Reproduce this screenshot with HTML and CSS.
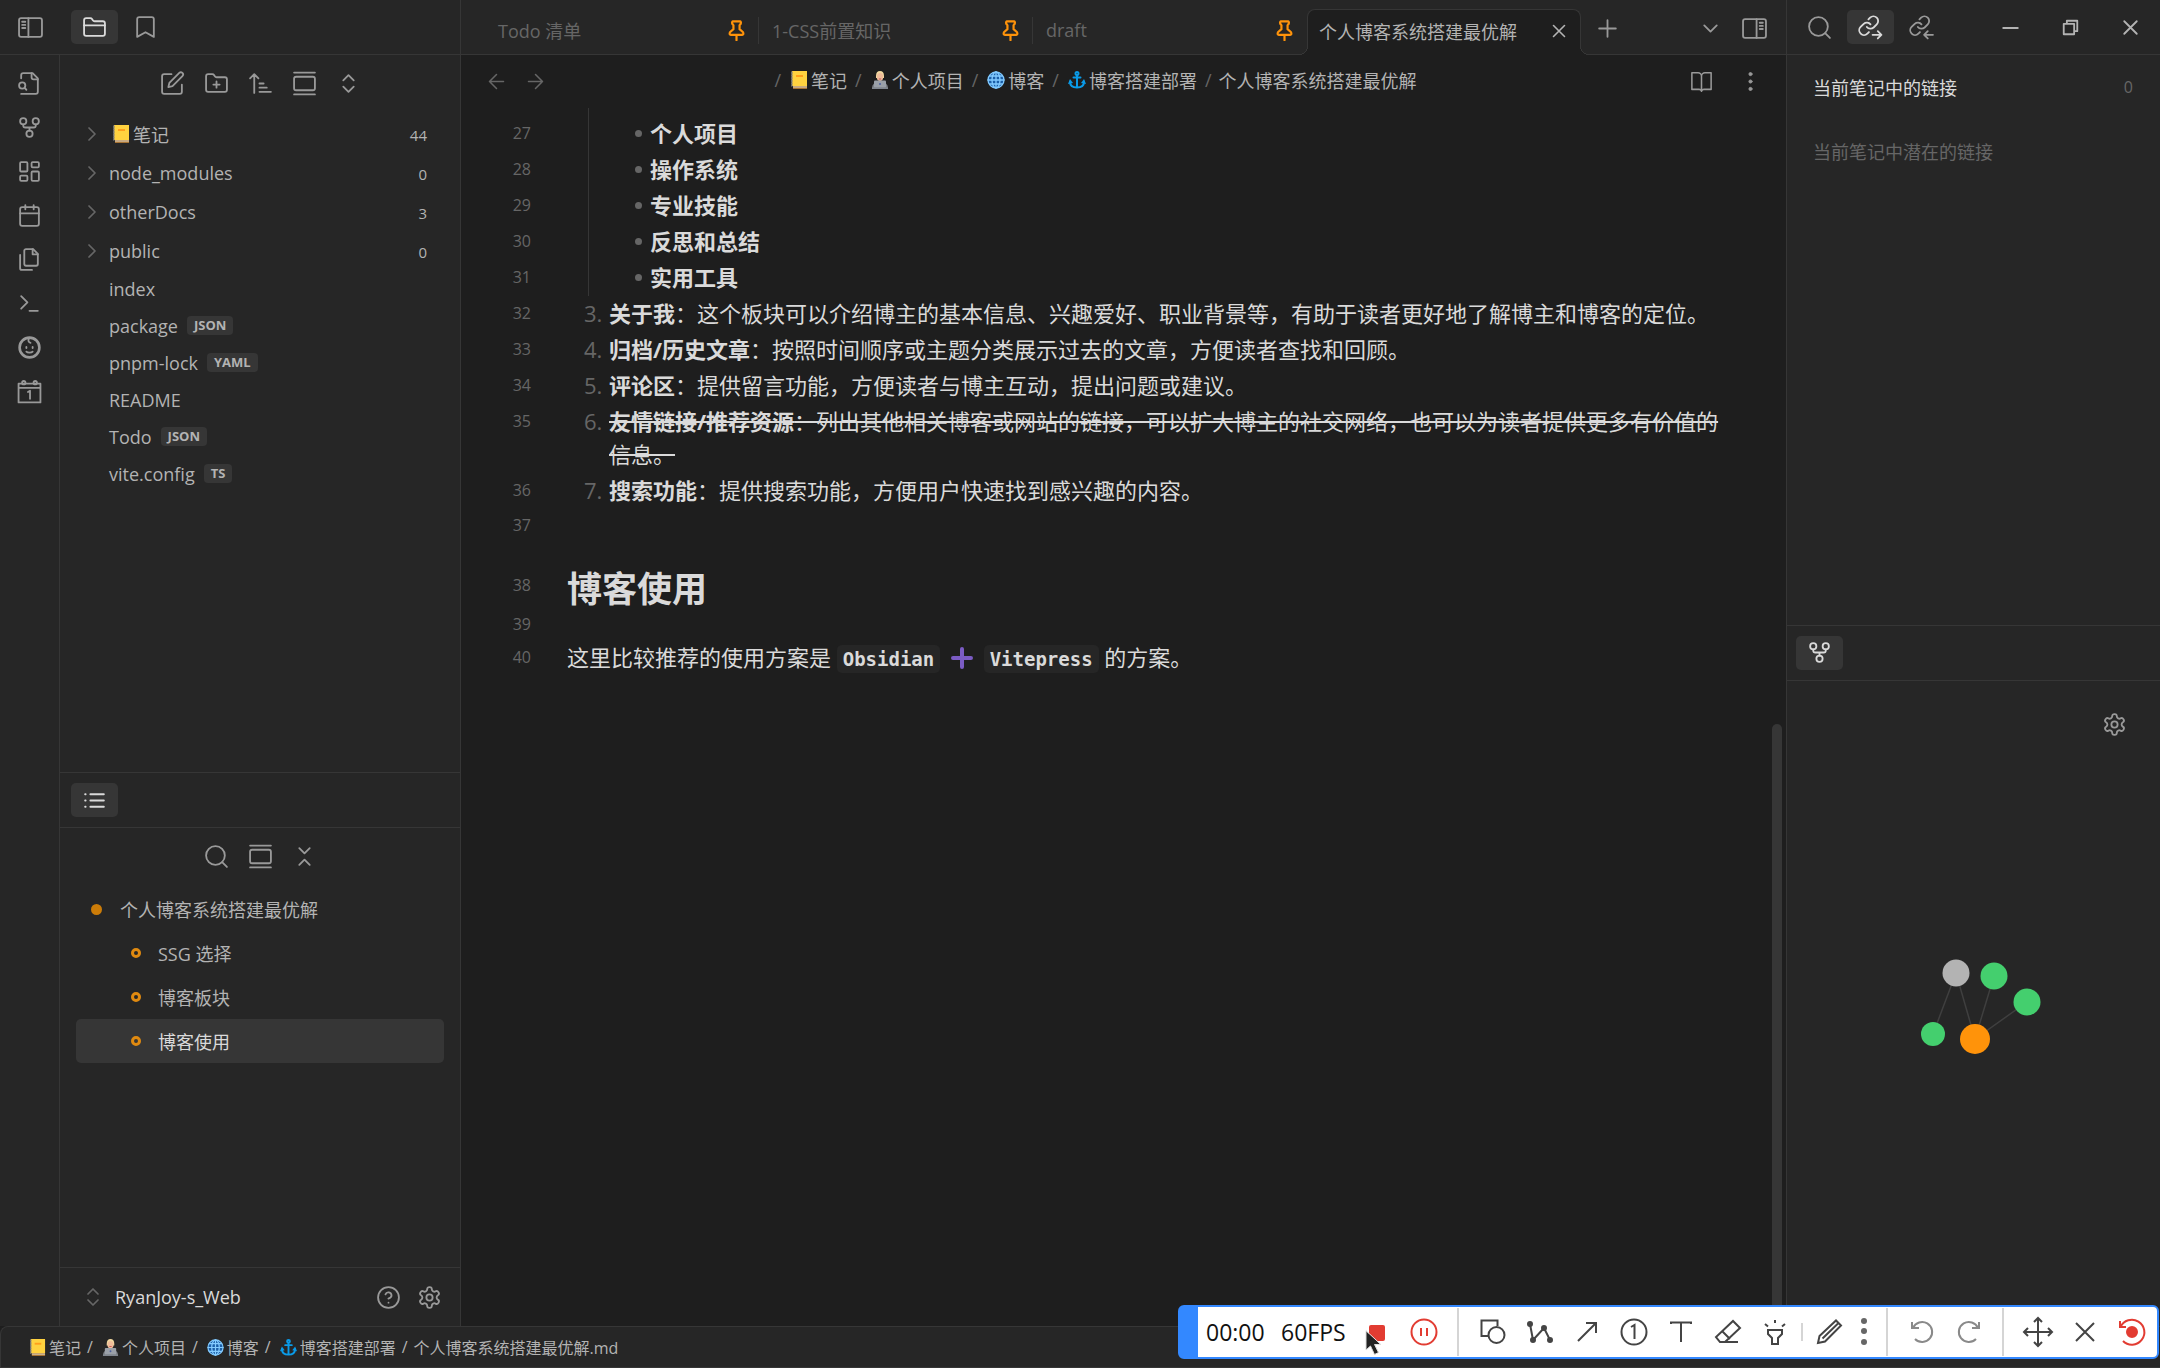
FILE: index.html
```
<!DOCTYPE html>
<html lang="zh-CN">
<head>
  <meta charset="UTF-8">
  <title>个人博客系统搭建最优解 - RyanJoy-s_Web</title>
  <link rel="stylesheet" href="styles.css">
</head>
<body>

  <!-- icons -->
  <svg class="sprite" aria-hidden="true">
    <symbol id="sidebar-left" viewBox="0 0 24 24"><rect x="1" y="3" width="22" height="18" rx="2"/><path d="M10 3v18M4 6.500h3M4 9.500h3M4 12.500h3"/></symbol>
    <symbol id="sidebar-right" viewBox="0 0 24 24"><rect x="1" y="3" width="22" height="18" rx="2"/><path d="M14 3v18M17 6.500h3M17 9.500h3M17 12.500h3"/></symbol>
    <symbol id="folder" viewBox="0 0 24 24"><path d="M4 20h16a2 2 0 0 0 2-2V8a2 2 0 0 0-2-2h-7.900a2 2 0 0 1-1.700-.9L9.600 3.900A2 2 0 0 0 7.900 3H4a2 2 0 0 0-2 2v13a2 2 0 0 0 2 2Z"/><path d="M2 10h20"/></symbol>
    <symbol id="bookmark" viewBox="0 0 24 24"><path d="m20 21-8-4.500L4 21V4a2 2 0 0 1 2-2h12a2 2 0 0 1 2 2v17z"/></symbol>
    <symbol id="file-search" viewBox="0 0 24 24"><path d="M4 22h14a2 2 0 0 0 2-2V7l-5-5H6a2 2 0 0 0-2 2v3"/><path d="M14 2v4a2 2 0 0 0 2 2h4"/><circle cx="5" cy="14" r="3"/><path d="m9 18-1.500-1.500"/></symbol>
    <symbol id="fork" viewBox="0 0 24 24"><circle cx="12" cy="18" r="3"/><circle cx="6" cy="6" r="3"/><circle cx="18" cy="6" r="3"/><path d="M18 9v1a2 2 0 0 1-2 2H8a2 2 0 0 1-2-2V9M12 12v3"/></symbol>
    <symbol id="dashboard" viewBox="0 0 24 24"><rect x="3" y="3" width="7" height="9" rx="1"/><rect x="14" y="3" width="7" height="5" rx="1"/><rect x="14" y="12" width="7" height="9" rx="1"/><rect x="3" y="16" width="7" height="5" rx="1"/></symbol>
    <symbol id="calendar" viewBox="0 0 24 24"><rect x="3" y="4" width="18" height="18" rx="2"/><path d="M16 2v4M8 2v4M3 10h18"/></symbol>
    <symbol id="files" viewBox="0 0 24 24"><path d="M15.500 2H8.600a1.600 1.600 0 0 0-1.600 1.600v12.800A1.600 1.600 0 0 0 8.600 18h9.800a1.600 1.600 0 0 0 1.600-1.600V6.500z"/><path d="M3 7.600v12.800A1.600 1.600 0 0 0 4.600 22h9.800M15 2v5h5"/></symbol>
    <symbol id="terminal" viewBox="0 0 24 24"><path d="m4 17 6-6-6-6M12 19h8"/></symbol>
    <symbol id="baby" viewBox="0 0 24 24"><circle cx="12" cy="12" r="9.500" stroke-width="2.500"/><path d="M9 11.500v1M15 11.500v1M9 16c1 1.200 5 1.200 6 0M12 3c-2 2-1 4 1 4.500"/></symbol>
    <symbol id="day" viewBox="0 0 24 24"><path d="M1.500 4.500h21v18h-21zM1.500 8.500h21M10.500 12.500l2-1.200V19"/><circle cx="6.500" cy="3.500" r="1.600"/><circle cx="17.500" cy="3.500" r="1.600"/></symbol>
    <symbol id="edit" viewBox="0 0 24 24"><path d="M11 3H4a2 2 0 0 0-2 2v15a2 2 0 0 0 2 2h15a2 2 0 0 0 2-2v-7"/><path d="M18.500 1.900a2.100 2.100 0 0 1 3 3L12 14.500l-4 1 1-4 9.500-9.600z"/></symbol>
    <symbol id="folder-plus" viewBox="0 0 24 24"><path d="M4 20h16a2 2 0 0 0 2-2V8a2 2 0 0 0-2-2h-7.900a2 2 0 0 1-1.700-.9L9.600 3.900A2 2 0 0 0 7.900 3H4a2 2 0 0 0-2 2v13a2 2 0 0 0 2 2Z"/><path d="M12 10v6M9 13h6"/></symbol>
    <symbol id="sort" viewBox="0 0 24 24"><path d="m2 7 4-4 4 4M6 3v18M11 12h4M11 16h7M11 20h11"/></symbol>
    <symbol id="gallery" viewBox="0 0 24 24"><path d="M2 1.500h20M2 22.500h20"/><rect x="2" y="5.500" width="20" height="13" rx="2"/></symbol>
    <symbol id="up-down" viewBox="0 0 24 24"><path d="m7 15 5 5 5-5M7 9l5-5 5 5"/></symbol>
    <symbol id="down-up" viewBox="0 0 24 24"><path d="m7 20 5-5 5 5M7 4l5 5 5-5"/></symbol>
    <symbol id="chevron-right" viewBox="0 0 24 24"><path d="m9 18 6-6-6-6"/></symbol>
    <symbol id="chevron-down" viewBox="0 0 24 24"><path d="m6 9 6 6 6-6"/></symbol>
    <symbol id="list" viewBox="0 0 24 24"><path d="M8 6h13M8 12h13M8 18h13M3 6h.500M3 12h.500M3 18h.500"/></symbol>
    <symbol id="search" viewBox="0 0 24 24"><circle cx="11" cy="11" r="9"/><path d="m22 22-4.600-4.600"/></symbol>
    <symbol id="help" viewBox="0 0 24 24"><circle cx="12" cy="12" r="10"/><path d="M9.100 9a3 3 0 0 1 5.800 1c0 2-3 3-3 3M12 17h.01"/></symbol>
    <symbol id="gear" viewBox="0 0 24 24"><path d="M12.220 2h-.44a2 2 0 0 0-2 2v.18a2 2 0 0 1-1 1.730l-.43.25a2 2 0 0 1-2 0l-.15-.08a2 2 0 0 0-2.730.73l-.22.38a2 2 0 0 0 .73 2.730l.15.1a2 2 0 0 1 1 1.720v.51a2 2 0 0 1-1 1.740l-.15.09a2 2 0 0 0-.73 2.730l.22.38a2 2 0 0 0 2.730.73l.15-.08a2 2 0 0 1 2 0l.43.25a2 2 0 0 1 1 1.730V20a2 2 0 0 0 2 2h.44a2 2 0 0 0 2-2v-.18a2 2 0 0 1 1-1.730l.43-.25a2 2 0 0 1 2 0l.15.08a2 2 0 0 0 2.730-.73l.22-.39a2 2 0 0 0-.73-2.730l-.15-.08a2 2 0 0 1-1-1.740v-.5a2 2 0 0 1 1-1.740l.15-.09a2 2 0 0 0 .73-2.730l-.22-.38a2 2 0 0 0-2.730-.73l-.15.08a2 2 0 0 1-2 0l-.43-.25a2 2 0 0 1-1-1.730V4a2 2 0 0 0-2-2z"/><circle cx="12" cy="12" r="3"/></symbol>
    <symbol id="pin" viewBox="0 0 24 24"><path d="M12 17v6M7.500 1.500h9q1.500 2-1 4.500v4.500l4 3.500q1 3-1 3h-13q-2 0-1-3l4-3.500V6Q6 3.500 7.500 1.500z"/></symbol>
    <symbol id="close" viewBox="0 0 24 24"><path d="M18 6 6 18M6 6l12 12"/></symbol>
    <symbol id="plus" viewBox="0 0 24 24"><path d="M12 4v16M4 12h16"/></symbol>
    <symbol id="arrow-left" viewBox="0 0 24 24"><path d="M20 12H4M12 20l-8-8 8-8"/></symbol>
    <symbol id="arrow-right" viewBox="0 0 24 24"><path d="M4 12h16M12 4l8 8-8 8"/></symbol>
    <symbol id="book" viewBox="0 0 24 24"><path d="M1 2h7a4 4 0 0 1 4 4v17a3 3 0 0 0-3-2H1zM23 2h-7a4 4 0 0 0-4 4v17a3 3 0 0 1 3-2h8z"/></symbol>
    <symbol id="dots" viewBox="0 0 24 24"><g fill="currentColor" stroke-width="1"><circle cx="12" cy="3.500" r="1.800"/><circle cx="12" cy="12" r="1.800"/><circle cx="12" cy="20.500" r="1.800"/></g></symbol>
    <symbol id="link-out" viewBox="0 0 24 24"><path d="M8.500 11.500a4.500 4.500 0 0 0 6.500.500l3-3a4.500 4.500 0 0 0-6.400-6.400L10 4.200"/><path d="M12 9a4.500 4.500 0 0 0-6.500-.500l-3 3A4.500 4.500 0 0 0 9 17.900l1.500-1.500"/><path d="M14 19h8.500M19 15.500l3.500 3.500-3.500 3.500"/></symbol>
    <symbol id="link-in" viewBox="0 0 24 24"><path d="M8.500 11.500a4.500 4.500 0 0 0 6.500.500l3-3a4.500 4.500 0 0 0-6.400-6.400L10 4.200"/><path d="M12 9a4.500 4.500 0 0 0-6.500-.500l-3 3A4.500 4.500 0 0 0 9 17.900l1.500-1.500"/><path d="M23 19h-8.500M18 15.500 14.500 19l3.500 3.500"/></symbol>
    <symbol id="win-min" viewBox="0 0 24 24"><path d="M5 12.500h14"/></symbol>
    <symbol id="win-max" viewBox="0 0 24 24"><path d="M5.500 8.500h10v10h-10zM8.500 8.500v-3h10v10h-3"/></symbol>

    <!-- emoji -->
    <symbol id="notebook" viewBox="0 0 18 18"><path fill="#a87333" d="M3 1h14v17H3z"/><path fill="#ffd23f" d="M2 0h15v15H2z"/><path fill="#e6e0cf" d="M3 15.500h14v1H3z"/><path fill="#ff9f1c" d="M6 4h7v2H6z"/><path stroke="#777" stroke-width="1.500" stroke-dasharray="1.500 1.200" d="M1.800 1v14"/></symbol>
    <symbol id="coder" viewBox="0 0 18 18"><path fill="#7d8086" d="M1 17q0-6 8-6t8 6z"/><path fill="#f2d9a0" d="M5 5q0-5 4-5t4 5v2H5z"/><ellipse cx="9" cy="6" rx="3.200" ry="4" fill="#f0bd9a"/><path fill="#c9505a" d="M7.800 7.500h2.400v1H7.800z"/><rect x="3" y="9.500" width="12" height="7" rx="1" fill="#9aa0a8"/><path fill="#80868f" d="M1 16.500h16V18H1z"/><circle cx="9" cy="13" r="1" fill="#4d5f9c"/></symbol>
    <symbol id="globe" viewBox="0 0 18 18"><circle cx="9" cy="9" r="8" fill="#1b5fa8" stroke="#83cbff" stroke-width="1.300"/><path fill="none" stroke="#83cbff" stroke-width="1.300" d="M9 1v16M1 9h16M2.500 5h13M2.500 13h13"/><ellipse cx="9" cy="9" rx="4" ry="8" fill="none" stroke="#83cbff" stroke-width="1.300"/></symbol>
    <symbol id="anchor" viewBox="0 0 18 18"><g fill="none" stroke="#0a9be8" stroke-width="2"><circle cx="9" cy="2.500" r="1.500"/><path d="M9 4v12.500M5.500 6.500h7M2 10.500q0 6 7 6t7-6"/></g><path fill="#0a9be8" d="M0 13l2-5 3 4zM18 13l-2-5-3 4z"/></symbol>
  </svg>

  <div class="workspace">

    <aside class="left">
      <div class="pane-header">
        <button class="icon-btn ribbon-toggle" aria-label="sidebar"><svg><use href="#sidebar-left"/></svg></button>
        <button class="tab-btn active" aria-label="files"><svg><use href="#folder"/></svg></button>
        <button class="tab-btn" aria-label="bookmarks"><svg><use href="#bookmark"/></svg></button>
      </div>
      <div class="left-body">
        <nav class="ribbon">
          <button class="icon-btn" aria-label="quick switcher"><svg><use href="#file-search"/></svg></button>
          <button class="icon-btn" aria-label="graph"><svg><use href="#fork"/></svg></button>
          <button class="icon-btn" aria-label="canvas"><svg><use href="#dashboard"/></svg></button>
          <button class="icon-btn" aria-label="daily note"><svg><use href="#calendar"/></svg></button>
          <button class="icon-btn" aria-label="templates"><svg><use href="#files"/></svg></button>
          <button class="icon-btn" aria-label="commands"><svg><use href="#terminal"/></svg></button>
          <button class="icon-btn" aria-label="face"><svg><use href="#baby"/></svg></button>
          <button class="icon-btn" aria-label="today"><svg><use href="#day"/></svg></button>
        </nav>
        <div class="side">
          <section class="files">
            <div class="toolbar">
              <button class="icon-btn" aria-label="new note"><svg><use href="#edit"/></svg></button>
              <button class="icon-btn" aria-label="new folder"><svg><use href="#folder-plus"/></svg></button>
              <button class="icon-btn" aria-label="sort"><svg><use href="#sort"/></svg></button>
              <button class="icon-btn" aria-label="reveal"><svg><use href="#gallery"/></svg></button>
              <button class="icon-btn" aria-label="expand"><svg><use href="#up-down"/></svg></button>
            </div>
            <ul class="tree">
              <li class="folder"><svg class="chev"><use href="#chevron-right"/></svg><svg class="emoji"><use href="#notebook"/></svg>笔记<span class="count">44</span></li>
              <li class="folder"><svg class="chev"><use href="#chevron-right"/></svg>node_modules<span class="count">0</span></li>
              <li class="folder"><svg class="chev"><use href="#chevron-right"/></svg>otherDocs<span class="count">3</span></li>
              <li class="folder"><svg class="chev"><use href="#chevron-right"/></svg>public<span class="count">0</span></li>
              <li>index</li>
              <li>package<span class="tag">JSON</span></li>
              <li>pnpm-lock<span class="tag">YAML</span></li>
              <li>README</li>
              <li>Todo<span class="tag">JSON</span></li>
              <li>vite.config<span class="tag">TS</span></li>
            </ul>
          </section>
          <section class="outline">
            <div class="sub-header">
              <button class="tab-btn active" aria-label="outline"><svg><use href="#list"/></svg></button>
            </div>
            <div class="toolbar">
              <button class="icon-btn" aria-label="search"><svg><use href="#search"/></svg></button>
              <button class="icon-btn" aria-label="reveal"><svg><use href="#gallery"/></svg></button>
              <button class="icon-btn" aria-label="collapse"><svg><use href="#down-up"/></svg></button>
            </div>
            <ul class="headings">
              <li class="top">个人博客系统搭建最优解</li>
              <li>SSG 选择</li>
              <li>博客板块</li>
              <li class="selected">博客使用</li>
            </ul>
          </section>
          <div class="vault">
            <svg class="chev"><use href="#up-down"/></svg>
            <span class="vault-name">RyanJoy-s_Web</span>
            <button class="icon-btn" aria-label="help"><svg><use href="#help"/></svg></button>
            <button class="icon-btn" aria-label="settings"><svg><use href="#gear"/></svg></button>
          </div>
        </div>
      </div>
    </aside>

    <main class="main">
      <div class="tabs">
        <button class="tab">Todo 清单<svg class="pin"><use href="#pin"/></svg></button>
        <button class="tab">1-CSS前置知识<svg class="pin"><use href="#pin"/></svg></button>
        <button class="tab no-line">draft<svg class="pin"><use href="#pin"/></svg></button>
        <button class="tab current">个人博客系统搭建最优解<svg class="x"><use href="#close"/></svg></button>
        <button class="icon-btn new-tab" aria-label="new tab"><svg><use href="#plus"/></svg></button>
        <div class="tabs-right">
          <button class="icon-btn" aria-label="tab list"><svg><use href="#chevron-down"/></svg></button>
          <button class="icon-btn" aria-label="right sidebar"><svg><use href="#sidebar-right"/></svg></button>
        </div>
      </div>

      <div class="view-header">
        <button class="icon-btn faint" aria-label="back"><svg><use href="#arrow-left"/></svg></button>
        <button class="icon-btn faint" aria-label="forward"><svg><use href="#arrow-right"/></svg></button>
        <div class="crumbs">
          <span class="sep">/</span><svg class="emoji"><use href="#notebook"/></svg>笔记
          <span class="sep">/</span><svg class="emoji"><use href="#coder"/></svg>个人项目
          <span class="sep">/</span><svg class="emoji"><use href="#globe"/></svg>博客
          <span class="sep">/</span><svg class="emoji"><use href="#anchor"/></svg>博客搭建部署
          <span class="sep">/</span>个人博客系统搭建最优解
        </div>
        <button class="icon-btn" aria-label="reading view"><svg><use href="#book"/></svg></button>
        <button class="icon-btn" aria-label="more"><svg><use href="#dots"/></svg></button>
      </div>

      <div class="editor">
        <div class="lines">
          <div class="line sub first"><span class="num">27</span><div class="text"><strong>个人项目</strong></div></div>
          <div class="line sub"><span class="num">28</span><div class="text"><strong>操作系统</strong></div></div>
          <div class="line sub"><span class="num">29</span><div class="text"><strong>专业技能</strong></div></div>
          <div class="line sub"><span class="num">30</span><div class="text"><strong>反思和总结</strong></div></div>
          <div class="line sub"><span class="num">31</span><div class="text"><strong>实用工具</strong></div></div>
          <div class="line item"><span class="num">32</span><span class="marker">3.</span><div class="text"><strong>关于我</strong>：这个板块可以介绍博主的基本信息、兴趣爱好、职业背景等，有助于读者更好地了解博主和博客的定位。</div></div>
          <div class="line item"><span class="num">33</span><span class="marker">4.</span><div class="text"><strong>归档/历史文章</strong>：按照时间顺序或主题分类展示过去的文章，方便读者查找和回顾。</div></div>
          <div class="line item"><span class="num">34</span><span class="marker">5.</span><div class="text"><strong>评论区</strong>：提供留言功能，方便读者与博主互动，提出问题或建议。</div></div>
          <div class="line item"><span class="num">35</span><span class="marker">6.</span><div class="text"><s><strong>友情链接/推荐资源</strong>：列出其他相关博客或网站的链接，可以扩大博主的社交网络，也可以为读者提供更多有价值的信息。</s></div></div>
          <div class="line item"><span class="num">36</span><span class="marker">7.</span><div class="text"><strong>搜索功能</strong>：提供搜索功能，方便用户快速找到感兴趣的内容。</div></div>
          <div class="line"><span class="num">37</span></div>
          <div class="line heading"><span class="num">38</span><h2>博客使用</h2></div>
          <div class="line"><span class="num">39</span></div>
          <div class="line"><span class="num">40</span><div class="text">这里比较推荐的使用方案是 <code>Obsidian</code> <svg class="plus-emoji" viewBox="0 0 22 22"><path d="M11 2v18M2 11h18"/></svg> <code>Vitepress</code> 的方案。</div></div>
        </div>
        <div class="scroll"><div class="thumb"></div></div>
      </div>
    </main>

    <aside class="right">
      <div class="pane-header">
        <button class="tab-btn" aria-label="search"><svg><use href="#search"/></svg></button>
        <button class="tab-btn active" aria-label="outgoing links"><svg><use href="#link-out"/></svg></button>
        <button class="tab-btn" aria-label="backlinks"><svg><use href="#link-in"/></svg></button>
        <div class="window-btns">
          <button class="icon-btn" aria-label="minimize"><svg><use href="#win-min"/></svg></button>
          <button class="icon-btn" aria-label="restore"><svg><use href="#win-max"/></svg></button>
          <button class="icon-btn" aria-label="close"><svg><use href="#close"/></svg></button>
        </div>
      </div>
      <section class="links">
        <div class="links-title">当前笔记中的链接<span>0</span></div>
        <div class="links-title dim">当前笔记中潜在的链接</div>
      </section>
      <section class="graph">
        <div class="sub-header">
          <button class="tab-btn active" aria-label="local graph"><svg><use href="#fork"/></svg></button>
        </div>
        <div class="graph-canvas">
          <button class="icon-btn graph-gear" aria-label="graph settings"><svg><use href="#gear"/></svg></button>
          <svg class="nodes" viewBox="0 0 131 109">
            <path stroke="#3f3f3f" stroke-width="1.500" d="M25 85 48 24 67 90 86 27M67 90l52-37"/>
            <circle cx="48" cy="24" r="13.500" fill="#b3b3b3"/>
            <circle cx="86" cy="27" r="13.500" fill="#44cf6e"/>
            <circle cx="119" cy="53" r="13.500" fill="#44cf6e"/>
            <circle cx="25" cy="85" r="12" fill="#44cf6e"/>
            <circle cx="67" cy="90" r="15" fill="#ff930a"/>
          </svg>
        </div>
      </section>
    </aside>
  </div>

  <footer class="status">
    <svg class="emoji"><use href="#notebook"/></svg>笔记
    <span class="sep">/</span><svg class="emoji"><use href="#coder"/></svg>个人项目
    <span class="sep">/</span><svg class="emoji"><use href="#globe"/></svg>博客
    <span class="sep">/</span><svg class="emoji"><use href="#anchor"/></svg>博客搭建部署
    <span class="sep">/</span>个人博客系统搭建最优解.md
  </footer>

  <!-- screen recorder -->
  <div class="recorder">
    <div class="handle"></div>
    <span class="time">00:00</span>
    <span class="fps">60FPS</span>
    <button class="rec-btn red" aria-label="stop"><svg viewBox="0 0 32 32"><rect x="8" y="9" width="16" height="16" rx="2" fill="currentColor" stroke="none"/></svg></button>
    <button class="rec-btn red" aria-label="pause"><svg viewBox="0 0 32 32"><circle cx="16" cy="16" r="12.500"/><path d="M13 12v8M19 12v8"/></svg></button>
    <i class="bar"></i>
    <button class="rec-btn" aria-label="shapes"><svg viewBox="0 0 32 32"><path d="M11 20H4.500V4.500h16V10"/><circle cx="19.500" cy="19" r="8"/></svg></button>
    <button class="rec-btn" aria-label="polyline"><svg viewBox="0 0 32 32"><path d="m6 8 3 16 11-12 6 12"/><g fill="currentColor"><circle cx="6" cy="8" r="2"/><circle cx="9" cy="24" r="2"/><circle cx="20" cy="12" r="2"/><circle cx="26" cy="24" r="2"/></g></svg></button>
    <button class="rec-btn" aria-label="arrow"><svg viewBox="0 0 32 32"><path d="M7 25 25 7M15 7h10v10"/></svg></button>
    <button class="rec-btn" aria-label="number"><svg viewBox="0 0 32 32"><circle cx="16" cy="16" r="12.500"/><path d="m13 11 3.500-2v14"/></svg></button>
    <button class="rec-btn" aria-label="text"><svg viewBox="0 0 32 32"><path d="M6 8V6.500h20V8M16 6.500V26"/></svg></button>
    <button class="rec-btn" aria-label="eraser"><svg viewBox="0 0 32 32"><path d="M26 26H8l-4-5L21 5l7 7-15 14M10 15l8 8"/></svg></button>
    <button class="rec-btn" aria-label="spotlight"><svg viewBox="0 0 32 32"><path d="M9 14h14v4l-4 4v6h-6v-6l-4-4zM16 4v3M6 8l3 2.500M26 8l-3 2.500"/></svg></button>
    <i class="bar short"></i>
    <button class="rec-btn" aria-label="pencil"><svg viewBox="0 0 32 32"><path d="m5 27 1.500-7L23 4.500l5 5L12 25.500zM25 7.500 9.500 22.500"/></svg></button>
    <button class="rec-btn narrow" aria-label="more"><svg viewBox="0 0 32 32"><g fill="#666" stroke="none"><circle cx="16" cy="5" r="3"/><circle cx="16" cy="15" r="3"/><circle cx="16" cy="26" r="3"/></g></svg></button>
    <i class="bar"></i>
    <button class="rec-btn grey" aria-label="undo"><svg viewBox="0 0 32 32"><path d="M9 23a10 10 0 1 0-2-11M6 6v6h7"/></svg></button>
    <button class="rec-btn grey" aria-label="redo"><svg viewBox="0 0 32 32"><path d="M23 23a10 10 0 1 1 2-11M26 6v6h-7"/></svg></button>
    <i class="bar"></i>
    <button class="rec-btn" aria-label="move"><svg viewBox="0 0 32 32"><path d="M16 2v28M2 16h28M12 6l4-4 4 4M12 26l4 4 4-4M6 12l-4 4 4 4M26 12l4 4-4 4"/></svg></button>
    <button class="rec-btn" aria-label="close"><svg viewBox="0 0 32 32"><path d="M7 7l18 18M25 7 7 25"/></svg></button>
    <button class="rec-btn red" aria-label="restart"><svg viewBox="0 0 32 32"><path d="M7 25a12.500 12.500 0 1 0-2.500-14M4 5v6h6"/><circle cx="16" cy="16" r="5" fill="currentColor"/></svg></button>
    <svg class="cursor" viewBox="0 0 18 26"><path d="M1 1v19l4.500-4 4 8.500 4-2-4-8h6z"/></svg>
  </div>

</body>
</html>
```
FILE: styles.css
```
*, *::before, *::after {
  box-sizing: border-box;
}

body {
  margin: 0;
  height: 100vh;
  display: flex;
  flex-direction: column;
  overflow: hidden;
  background: #1e1e1e;
  color: #b3b3b3;
  font-family: "Open Sans", "Noto Sans CJK SC", sans-serif;
  font-size: 18px;
}

ul {
  list-style: none;
  margin: 0;
  padding: 0;
}

svg {
  width: 25px;
  height: 25px;
  flex: none;
  fill: none;
  stroke: currentColor;
  stroke-width: 1.75;
  stroke-linecap: round;
  stroke-linejoin: round;
}

.sprite {
  display: none;
}

.emoji {
  width: 18px;
  height: 18px;
  margin: 0 3px;
  stroke: none;
}

button {
  border: none;
  background: none;
  padding: 0;
  color: inherit;
  font: inherit;
  cursor: pointer;
}

.icon-btn, .tab-btn {
  display: flex;
  align-items: center;
  justify-content: center;
  width: 44px;
  height: 44px;
  color: #999;
}

.tab-btn {
  width: 47px;
  height: 34px;
  border-radius: 5px;
}

.tab-btn.active {
  background: #363636;
  color: #dadada;
}

.icon-btn.faint {
  color: #666;
}

/* layout */
.workspace {
  flex: 1;
  display: flex;
  min-height: 0;
}

.pane-header, .sub-header {
  display: flex;
  align-items: center;
  gap: 4px;
  height: 55px;
  flex: none;
  border-bottom: 1px solid #363636;
}

/* left */
.left {
  width: 461px;
  display: flex;
  flex-direction: column;
  background: #262626;
  border-right: 1px solid #363636;
}

.ribbon-toggle {
  width: 60px;
  margin-right: 7px;
}

.left-body {
  flex: 1;
  display: flex;
  min-height: 0;
}

.ribbon {
  width: 60px;
  padding: 6px 7px;
  border-right: 1px solid #363636;
}

.side {
  flex: 1;
  display: flex;
  flex-direction: column;
}

.files {
  flex: 717 0 0;
  min-height: 0;
}

.outline {
  flex: 494 0 0;
  min-height: 0;
  border-top: 1px solid #363636;
}

.outline .sub-header {
  padding-left: 11px;
}

.toolbar {
  display: flex;
  justify-content: center;
  padding: 6px 0 9px;
}

.tree li {
  display: flex;
  align-items: center;
  height: 37px;
  padding: 0 33px 0 49px;
}

.tree .folder {
  height: 39px;
  padding-left: 20px;
}

.chev {
  width: 24px;
  height: 24px;
  margin-right: 5px;
  color: #666;
}

.count {
  margin-left: auto;
  padding-top: 2px;
  font-size: 15px;
}

.tag {
  margin-left: 9px;
  padding: 0 7px;
  line-height: 19px;
  font-size: 13px;
  font-weight: bold;
  border-radius: 4px;
  background: #363636;
}

.headings {
  padding: 0 16px;
}

.headings li {
  display: flex;
  align-items: center;
  height: 44px;
  padding-left: 55px;
  border-radius: 5px;
}

.headings li::before {
  content: "";
  width: 10px;
  height: 10px;
  margin-right: 17px;
  border: 3px solid #e08a10;
  border-radius: 50%;
}

.headings .top {
  padding-left: 15px;
}

.headings .top::before {
  width: 11px;
  height: 11px;
  margin-right: 18px;
  background: #cc7c08;
  border-color: #cc7c08;
}

.headings .selected {
  background: #363636;
  color: #dadada;
}

.vault {
  display: flex;
  align-items: center;
  height: 59px;
  padding: 0 10px 0 21px;
  border-top: 1px solid #363636;
}

.vault-name {
  flex: 1;
  margin-left: 5px;
  color: #dadada;
}

.vault .icon-btn {
  width: 41px;
}

/* main */
.main {
  flex: 1;
  min-width: 0;
  display: flex;
  flex-direction: column;
}

.tabs {
  display: flex;
  align-items: flex-end;
  height: 55px;
  padding-left: 24px;
  background: #262626;
  box-shadow: inset 0 -1px #363636;
}

.tab {
  position: relative;
  display: flex;
  align-items: center;
  justify-content: space-between;
  width: 274px;
  height: 46px;
  padding: 0 12px 4px 13px;
  color: #666;
}

.tab::after {
  content: "";
  position: absolute;
  right: 0;
  top: 8px;
  width: 1px;
  height: 27px;
  background: #363636;
}

.tab.no-line::after {
  display: none;
}

.pin {
  width: 21px;
  height: 21px;
  color: #ff930a;
  stroke-width: 2.5;
}

.x {
  width: 22px;
  height: 22px;
}

.tab.current {
  padding: 0 10px 4px 11px;
  color: #b3b3b3;
  background: #1e1e1e;
  border: 1px solid #363636;
  border-bottom: none;
  border-radius: 8px 8px 0 0;
}

/* curved feet of the active tab */
.tab.current::before, .tab.current::after {
  content: "";
  position: absolute;
  top: auto;
  bottom: 0;
  width: 9px;
  height: 9px;
}

.tab.current::before {
  left: -9px;
  background: radial-gradient(circle at 0 0, #262626 8px, #363636 8px 9px, #1e1e1e 9px);
}

.tab.current::after {
  right: -9px;
  background: radial-gradient(circle at 100% 0, #262626 8px, #363636 8px 9px, #1e1e1e 9px);
}

.new-tab {
  margin: 0 0 5px 4px;
}

.tabs-right {
  display: flex;
  margin: 0 10px 5px auto;
}

.view-header {
  display: flex;
  align-items: center;
  height: 53px;
  flex: none;
  padding: 0 16px;
}

.view-header svg {
  width: 21px;
  height: 21px;
}

.view-header .icon-btn {
  width: 39px;
}

.view-header .icon-btn:last-child {
  margin-left: 10px;
}

.crumbs {
  flex: 1;
  display: flex;
  align-items: center;
  justify-content: center;
  padding: 0 54px 3px 0;
}

.crumbs .emoji {
  width: 18px;
  height: 18px;
  margin: 0 3px 0 2px;
}

.sep {
  padding: 0 6px;
}

.crumbs .sep {
  padding: 0 7px 0 8px;
  color: #666;
}

.editor {
  flex: 1;
  display: flex;
  min-height: 0;
}

.lines {
  flex: 1;
  padding-right: 45px;
  color: #dadada;
  font-size: 22px;
  line-height: 33px;
}

.line {
  display: flex;
  min-height: 33px;
}

.num {
  width: 70px;
  margin-right: 36px;
  flex: none;
  text-align: right;
  color: #666;
  font-size: 16px;
}

.item {
  padding: 1px 0 2px;
}

.marker {
  width: 25px;
  margin-left: 17px;
  flex: none;
  color: #666;
}

.sub .num {
  padding-top: 1px;
}

.sub .text {
  display: flex;
  align-items: center;
  height: 36px;
  margin-left: 21px;
  padding: 0 0 2px 46px;
  border-left: 1px solid #363636;
}

.sub .text::before {
  content: "";
  width: 7px;
  height: 7px;
  margin-right: 8px;
  border-radius: 50%;
  background: #666;
}

.sub.first .num {
  padding-top: 9px;
}

.sub.first .text {
  height: 44px;
  padding-top: 8px;
}

s {
  text-decoration-thickness: 2px;
}

.heading {
  padding-top: 27px;
}

.heading .num {
  line-height: 32px;
}

h2 {
  margin: 0;
  font-size: 35px;
  line-height: 39px;
}

code {
  padding: 3px 6px;
  border-radius: 5px;
  background: #262626;
  font-family: "DejaVu Sans Mono", monospace;
  font-size: 19px;
  font-weight: bold;
}

.plus-emoji {
  width: 22px;
  height: 22px;
  margin: 0 5px;
  vertical-align: -3px;
  stroke: #7b5cc4;
  stroke-width: 4;
}

.scroll {
  display: flex;
  flex-direction: column;
  width: 14px;
  padding-right: 4px;
}

.scroll::before {
  content: "";
  flex: 616 0 0;
}

.thumb {
  flex: 602 0 0;
  border-radius: 5px;
  background: #363636;
}

/* right */
.right {
  width: 374px;
  display: flex;
  flex-direction: column;
  background: #262626;
  border-left: 1px solid #363636;
}

.right .pane-header, .right .sub-header {
  padding-left: 9px;
}

.window-btns {
  display: flex;
  margin-left: auto;
}

.window-btns .icon-btn {
  width: 60px;
  color: #b3b3b3;
}

.links {
  flex: 570 0 0;
  padding: 0 27px 0 26px;
}

.links-title {
  display: flex;
  justify-content: space-between;
  align-items: center;
  height: 64px;
  color: #dadada;
}

.links-title span {
  color: #666;
  font-size: 16px;
}

.links-title.dim {
  color: #666;
}

.graph {
  flex: 701 0 0;
  display: flex;
  flex-direction: column;
  border-top: 1px solid #363636;
}

.graph-canvas {
  position: relative;
  flex: 1;
  display: flex;
  align-items: center;
  justify-content: center;
}

.graph-gear {
  position: absolute;
  top: 22px;
  right: 24px;
}

.nodes {
  width: 131px;
  height: 109px;
  overflow: visible;
}

.nodes circle {
  stroke: none;
}

/* status bar */
.status {
  display: flex;
  align-items: center;
  height: 42px;
  flex: none;
  padding-left: 25px;
  border: 1px solid #363636;
  border-right: none;
  border-radius: 8px 0 0 0;
  background: #262626;
  font-size: 16px;
}

.status .emoji {
  width: 17px;
  height: 17px;
}

/* recorder */
.recorder {
  position: fixed;
  right: 1px;
  bottom: 9px;
  display: flex;
  align-items: center;
  height: 54px;
  padding-right: 2px;
  border: 2px solid #3388ff;
  border-radius: 6px;
  background: #fff;
  color: #111;
  font-size: 23px;
}

.handle {
  align-self: stretch;
  width: 18px;
  margin-right: 8px;
  background: #3388ff;
}

.time {
  width: 75px;
}

.fps {
  width: 72px;
}

.rec-btn {
  display: flex;
  justify-content: center;
  width: 47px;
  color: #444;
}

.rec-btn svg {
  width: 32px;
  height: 32px;
  stroke-width: 2;
  stroke-linecap: butt;
  stroke-linejoin: miter;
}

.rec-btn.narrow {
  width: 24px;
}

.rec-btn.red {
  color: #e23c32;
}

.rec-btn.grey {
  color: #8a8a8a;
}

.bar {
  width: 2px;
  height: 48px;
  margin: 0 10px;
  background: #d5d5d5;
}

.bar.short {
  height: 18px;
  margin: 0 2px 0 3px;
}

.cursor {
  position: absolute;
  left: 185px;
  top: 23px;
  width: 18px;
  height: 26px;
  fill: #222;
  stroke: #ddd;
  stroke-width: 1;
}
```
